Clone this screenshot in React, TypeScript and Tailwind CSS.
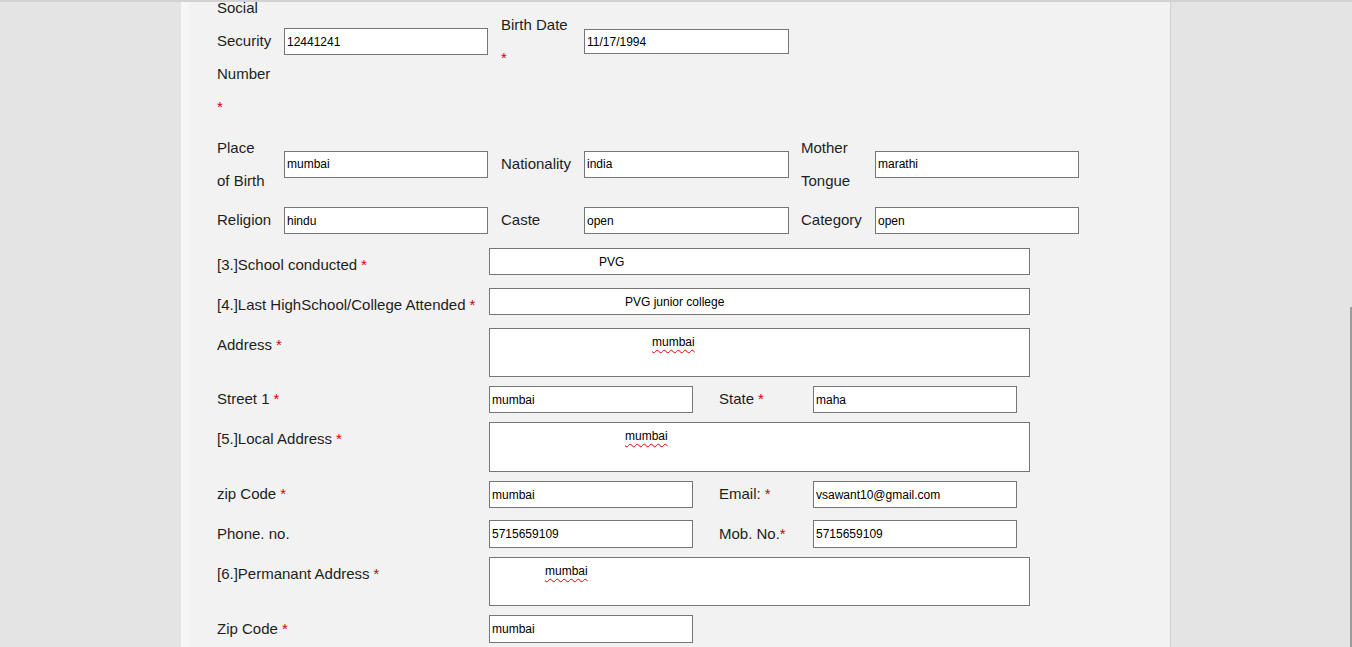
const field =
  "block bg-white border border-[#767676] px-[2px] text-[12px] text-black outline-none";

function Star({ gap = true }: { gap?: boolean }) {
  return <span className={`text-[#d40000] ${gap ? "ml-[4px]" : ""}`}>*</span>;
}

function Input({ value, w = "w-[204px]", h = "h-[27px]", indent = "" }: { value: string; w?: string; h?: string; indent?: string }) {
  return <input readOnly defaultValue={value} className={`${field} ${w} ${h} ${indent}`} />;
}

function Area({ value, indent, h = "h-[49px]" }: { value: string; indent: string; h?: string }) {
  return (
    <div className={`w-[541px] ${h} bg-white border border-[#767676] pt-[6px] text-[12px] leading-[14px] text-black ${indent}`}>
      <span className="underline decoration-wavy decoration-[#e00000] decoration-1 underline-offset-[3px]">{value}</span>
    </div>
  );
}

export default function App() {
  return (
    <div className="relative h-[647px] overflow-hidden bg-[#e4e4e4] font-['Liberation_Sans',Arial,sans-serif] text-[15px] text-[#1e1e1e]">
      <div className="flow-root ml-[181px] w-[990px] h-full bg-[#f2f2f2] border-l-[8px] border-l-[#f6f6f6] border-r border-r-[#d0d0d0]">
        <div className="pl-[28px] -mt-[9px]">
          {/* personal details table */}
          <div className="flex items-start h-[132px]">
            <div className="w-[67px] leading-[33px]">
              <div>Social</div>
              <div>Security</div>
              <div>Number</div>
              <div className="text-[#d40000]">*</div>
            </div>
            <div className="mt-[37px]">
              <Input value="12441241" />
            </div>
            <div className="ml-[13px] w-[83px] mt-[17px] leading-[33px]">
              <div>Birth Date</div>
              <div className="text-[#d40000]">*</div>
            </div>
            <div className="mt-[38px]">
              <Input value="11/17/1994" w="w-[205px]" h="h-[25px]" />
            </div>
          </div>

          <div className="flex items-center h-[66px] mt-[8px]">
            <div className="w-[67px] leading-[33px]">
              <div>Place</div>
              <div>of Birth</div>
            </div>
            <Input value="mumbai" />
            <div className="ml-[13px] w-[83px]">Nationality</div>
            <Input value="india" w="w-[205px]" />
            <div className="ml-[12px] w-[74px] leading-[33px]">
              <div>Mother</div>
              <div>Tongue</div>
            </div>
            <Input value="marathi" />
          </div>

          <div className="flex items-center h-[33px] mt-[7px]">
            <div className="w-[67px]">Religion</div>
            <Input value="hindu" />
            <div className="ml-[13px] w-[83px]">Caste</div>
            <Input value="open" w="w-[205px]" />
            <div className="ml-[12px] w-[74px]">Category</div>
            <Input value="open" />
          </div>

          {/* school & address */}
          <div className="flex items-start h-[27px] mt-[11px]">
            <div className="w-[272px] leading-[33px]">[3.]School conducted<Star /></div>
            <Input value="PVG" w="w-[541px]" indent="pl-[109px]" />
          </div>
          <div className="flex items-start h-[27px] mt-[13px]">
            <div className="w-[272px] leading-[33px] whitespace-nowrap">[4.]Last HighSchool/College Attended<Star /></div>
            <Input value="PVG junior college" w="w-[541px]" indent="pl-[135px]" />
          </div>
          <div className="flex items-start h-[49px] mt-[13px]">
            <div className="w-[272px] leading-[33px]">Address<Star /></div>
            <Area value="mumbai" indent="pl-[162px]" />
          </div>
          <div className="flex items-center h-[27px] mt-[9px]">
            <div className="w-[272px]">Street 1<Star /></div>
            <Input value="mumbai" />
            <div className="ml-[26px] w-[94px]">State<Star /></div>
            <Input value="maha" />
          </div>
          <div className="flex items-start h-[50px] mt-[9px]">
            <div className="w-[272px] leading-[33px]">[5.]Local Address<Star /></div>
            <Area value="mumbai" indent="pl-[135px]" h="h-[50px]" />
          </div>
          <div className="flex items-center h-[27px] mt-[9px]">
            <div className="w-[272px]">zip Code<Star /></div>
            <Input value="mumbai" />
            <div className="ml-[26px] w-[94px]">Email:<Star /></div>
            <Input value="vsawant10@gmail.com" />
          </div>
          <div className="flex items-center h-[28px] mt-[12px]">
            <div className="w-[272px]">Phone. no.</div>
            <Input value="5715659109" h="h-[28px]" />
            <div className="ml-[26px] w-[94px]">Mob. No.<Star gap={false} /></div>
            <Input value="5715659109" h="h-[28px]" />
          </div>
          <div className="flex items-start h-[49px] mt-[9px]">
            <div className="w-[272px] leading-[33px]">[6.]Permanant Address<Star /></div>
            <Area value="mumbai" indent="pl-[55px]" />
          </div>
          <div className="flex items-center h-[28px] mt-[9px]">
            <div className="w-[272px]">Zip Code<Star /></div>
            <Input value="mumbai" h="h-[28px]" />
          </div>
        </div>
      </div>
      <div className="absolute top-0 left-0 right-0 h-[2px] bg-[#d2d2d2]" />
      <div className="absolute right-0 top-[307px] bottom-0 w-[2px] bg-[#9c9c9c]" />
    </div>
  );
}
